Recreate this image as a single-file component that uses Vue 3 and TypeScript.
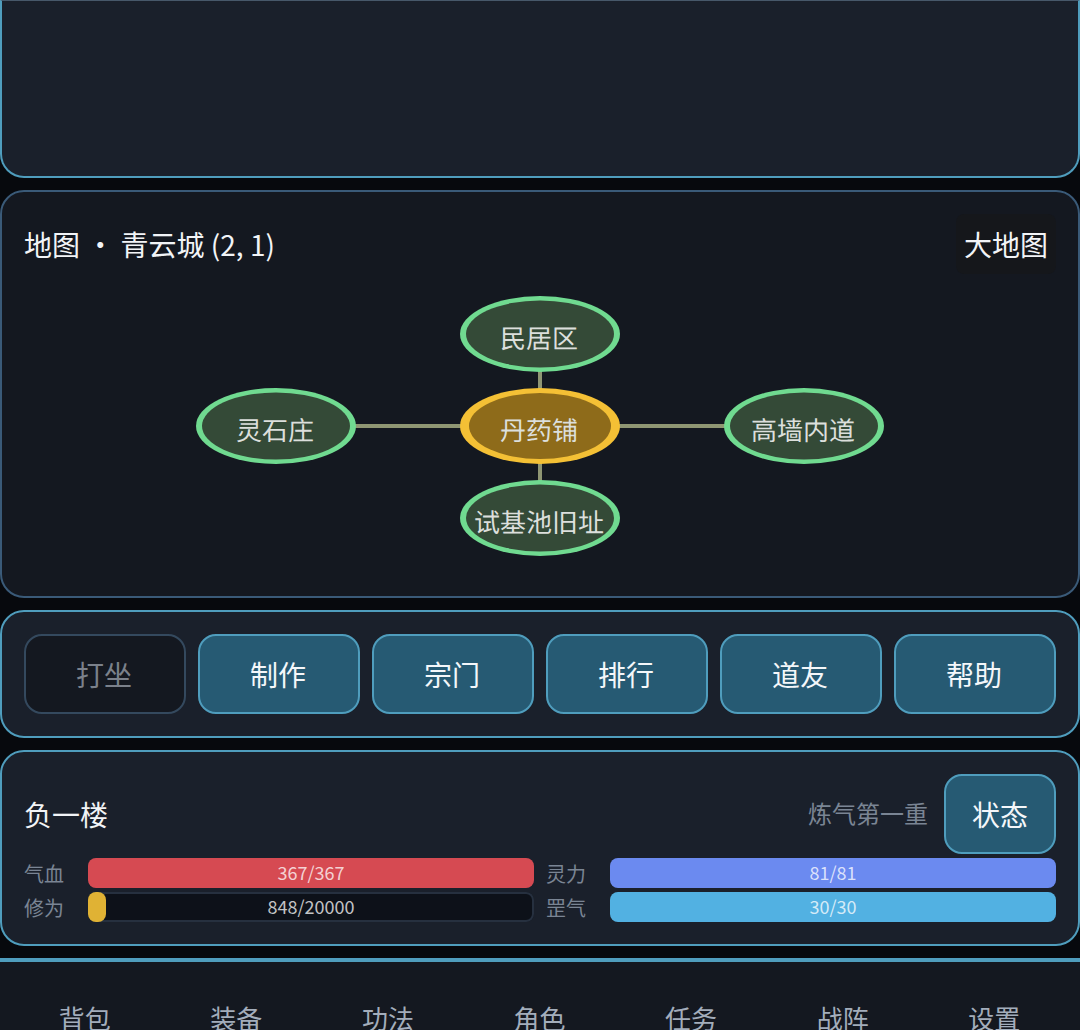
<script setup lang="ts">
const actions = ['制作', '宗门', '排行', '道友', '帮助']
const navs = ['背包', '装备', '功法', '角色', '任务', '战阵', '设置']
const bars = [
  { label: '气血', text: '367/367', width: 100, color: '#d64a52' },
  { label: '灵力', text: '81/81', width: 100, color: '#6b8af0' },
  { label: '修为', text: '848/20000', width: 4, color: '#e0b234' },
  { label: '罡气', text: '30/30', width: 100, color: '#52b1e2' },
]
const nodes = [
  { name: '民居区', cx: 540, cy: 334, current: false },
  { name: '灵石庄', cx: 276, cy: 426, current: false },
  { name: '丹药铺', cx: 540, cy: 426, current: true },
  { name: '高墙内道', cx: 804, cy: 426, current: false },
  { name: '试基池旧址', cx: 540, cy: 518, current: false },
]
</script>

<template>
  <div class="page">
    <section class="panel log"></section>

    <section class="panel map">
      <header class="map-head">
        <h2 class="map-title">地图 · 青云城 (2, 1)</h2>
        <button class="world-btn">大地图</button>
      </header>
      <svg class="graph" width="1076" height="300" viewBox="2 274 1076 300">
        <g stroke="#8f9673" stroke-width="4">
          <line x1="540" y1="334" x2="540" y2="518" />
          <line x1="276" y1="426" x2="804" y2="426" />
        </g>
        <g v-for="n in nodes" :key="n.name">
          <ellipse :cx="n.cx" :cy="n.cy" rx="80" ry="38" :fill="n.current ? '#f4c035' : '#70da90'" />
          <ellipse
            :cx="n.cx"
            :cy="n.cy"
            :rx="n.current ? 71 : 74"
            :ry="n.current ? 33 : 33.5"
            :fill="n.current ? '#8e6b1a' : '#344a37'"
          />
          <text class="node-text" :x="n.cx - 1" :y="n.cy + 14" text-anchor="middle">{{ n.name }}</text>
        </g>
      </svg>
    </section>

    <section class="panel actions">
      <button class="act shifted disabled">打坐</button>
      <button v-for="a in actions" :key="a" class="act shifted">{{ a }}</button>
    </section>

    <section class="panel status">
      <div class="status-head">
        <span class="place">负一楼</span>
        <span class="realm">炼气第一重</span>
        <button class="act state">状态</button>
      </div>
      <div class="bars">
        <div v-for="b in bars" :key="b.label" class="bar-row">
          <span class="bar-label">{{ b.label }}</span>
          <div class="track">
            <div class="fill" :style="{ width: b.width + '%', background: b.color }"></div>
            <span class="bar-text">{{ b.text }}</span>
          </div>
        </div>
      </div>
    </section>

    <nav class="nav">
      <span v-for="n in navs" :key="n" class="nav-item">{{ n }}</span>
    </nav>
  </div>
</template>

<style scoped>
.page {
  width: 1080px;
  height: 1030px;
  overflow: hidden;
  background: #07090d;
  display: flex;
  flex-direction: column;
  gap: 12px;
  font-family: "Noto Sans CJK SC", "Noto Sans", sans-serif;
  box-sizing: border-box;
}
.panel {
  box-sizing: border-box;
  border: 2px solid #4f9dbd;
  border-radius: 24px;
  background: #1a202b;
  flex: none;
}
.log {
  height: 178px;
  border-top: 1px solid #47586a;
  border-radius: 0 0 24px 24px;
}
.map {
  height: 408px;
  background: #141820;
  border-color: #3a5a78;
  padding: 22px 22px 0;
}
.map-head {
  display: flex;
  justify-content: space-between;
  align-items: center;
  height: 60px;
}
.map-title {
  margin: 0;
  font-size: 28px;
  font-weight: 400;
  color: #f2f4f7;
  white-space: pre;
}
.world-btn {
  height: 60px;
  padding: 0 8px;
  border: none;
  border-radius: 8px;
  background: #15171b;
  color: #f2f4f7;
  font: inherit;
  font-size: 28px;
}
.graph {
  display: block;
  margin: 0 -22px;
}
.node-text {
  font-size: 26px;
  fill: #dcdfdc;
  text-rendering: geometricPrecision;
}
.actions {
  height: 128px;
  padding: 22px;
  display: grid;
  grid-template-columns: repeat(6, 1fr);
  gap: 12px;
}
.act {
  box-sizing: border-box;
  height: 80px;
  padding: 0;
  border: 2px solid #4f9dbd;
  border-radius: 18px;
  background: #265a73;
  color: #f4f7fa;
  font: inherit;
  font-size: 28px;
}
.shifted {
  padding-right: 2px;
}
.act.disabled {
  background: #141820;
  border-color: #34495e;
  color: #7b818b;
}
.status {
  height: 196px;
  padding: 22px;
}
.status-head {
  display: flex;
  align-items: center;
  height: 80px;
}
.place {
  font-size: 28px;
  color: #f2f4f7;
  flex: 1;
}
.realm {
  font-size: 24px;
  line-height: 34px;
  padding-bottom: 2px;
  color: #7a8594;
  margin-right: 16px;
}
.state {
  width: 112px;
}
.bars {
  display: grid;
  grid-template-columns: 1fr 1fr;
  gap: 4px 12px;
  margin-top: 4px;
}
.bar-row {
  display: flex;
  align-items: center;
}
.bar-label {
  width: 64px;
  flex: none;
  font-size: 20px;
  color: #7a8594;
}
.track {
  position: relative;
  flex: 1;
  height: 30px;
  border-radius: 8px;
  background: #0d1119;
  box-shadow: inset 0 0 0 2px #26303f;
}
.fill {
  height: 100%;
  min-width: 18px;
  border-radius: 8px;
}
.bar-text {
  position: absolute;
  inset: 0 0 2px;
  display: flex;
  align-items: center;
  justify-content: center;
  font-size: 18px;
  color: rgba(255, 255, 255, 0.76);
}
.nav {
  flex: none;
  box-sizing: border-box;
  height: 72px;
  border-top: 4px solid #4f9dbd;
  background: #141820;
  display: grid;
  grid-template-columns: repeat(7, 1fr);
  padding: 43px 10px 0 9px;
}
.nav-item {
  text-align: center;
  font-size: 26px;
  line-height: 26px;
  color: #a3adbb;
}
</style>
